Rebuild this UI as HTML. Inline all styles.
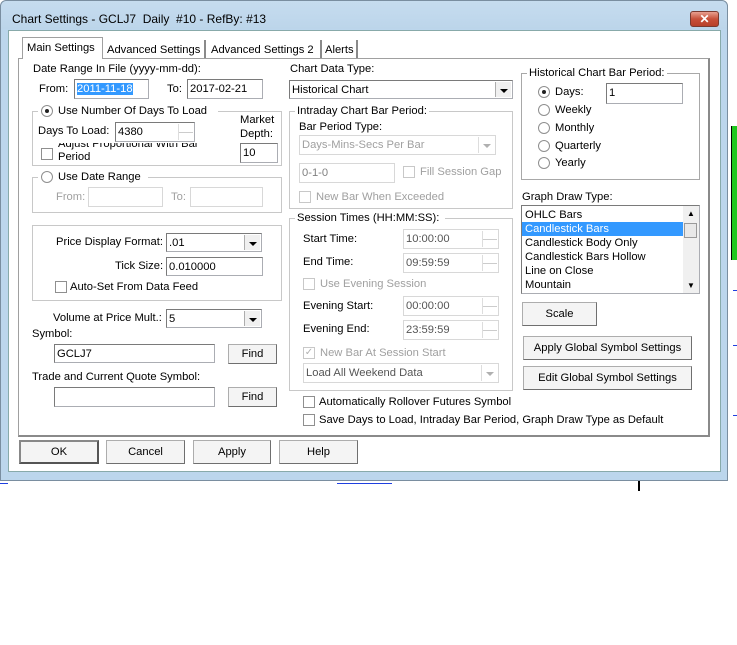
<!DOCTYPE html>
<html><head><style>
*{margin:0;padding:0;box-sizing:border-box}
body{width:737px;height:645px;background:#fff;position:relative;overflow:hidden;font-family:"Liberation Sans",sans-serif;font-size:11.2px;color:#000}
.a{position:absolute}
.t{position:absolute;line-height:14px;white-space:nowrap}
.d{color:#a0a0a0}
.in{position:absolute;background:#fff;border:1px solid #abadb3;border-top-color:#7a7a7a;border-left-color:#7a7a7a;line-height:18px;padding-left:2px;white-space:nowrap;overflow:hidden}
.in.dis{background:#fff;border-color:#d8d8d8;color:#a0a0a0}
.btn{position:absolute;background:#f4f4f4;border:1px solid #adadad;border-right-color:#6f6f6f;border-bottom-color:#6f6f6f;text-align:center;line-height:22px}
.grp{position:absolute;border:1px solid #c8c8c8;box-shadow:inset 1px 1px 0 #fff}
.cb{position:absolute;width:12px;height:12px;border:1px solid #8f8f8f;background:#fff}
.cb.dis{border-color:#c8c8c8}
.rb{position:absolute;width:12px;height:12px;border:1px solid #8f8f8f;border-radius:50%;background:#fff}
.rb.on::after{content:"";position:absolute;left:3px;top:3px;width:4px;height:4px;border-radius:50%;background:#222}
.dd{position:absolute;right:1px;top:1px;bottom:1px;width:16px;background:#f0f0f0;border-left:1px solid #adadad}
.dd::after{content:"";position:absolute;left:4px;top:7px;border:4px solid transparent;border-top:4px solid #000;border-bottom:0}
.dd.dis::after{border-top-color:#b0b0b0}
.sp{position:absolute;right:1px;top:1px;bottom:1px;width:15px;border-left:1px solid #ddd}
.sp::before{content:"";position:absolute;left:0;right:0;top:50%;border-top:1px solid #ccc}
</style></head><body>
<div class="a" style="left:731px;top:126px;width:6px;height:134px;background:#1ec81e;border-left:1px solid #000"></div>
<div class="a" style="left:733px;top:290px;width:4px;height:1px;background:#2040e0"></div>
<div class="a" style="left:733px;top:345px;width:4px;height:1px;background:#2040e0"></div>
<div class="a" style="left:733px;top:415px;width:4px;height:1px;background:#2040e0"></div>
<div class="a" style="left:638px;top:480px;width:2px;height:11px;background:#000"></div>
<div class="a" style="left:0;top:483px;width:8px;height:1px;background:#2040e0"></div>
<div class="a" style="left:337px;top:483px;width:55px;height:1px;background:#2040e0"></div>
<div class="a" style="left:0;top:0;width:728px;height:481px;background:#bcd6ec;border:1px solid #7a8ea0;border-radius:6px 6px 0 0"></div>
<div class="a" style="left:1px;top:1px;width:726px;height:28px;background:linear-gradient(#c6dcef,#bcd5ea);border-radius:6px 6px 0 0"></div>
<div class="t" style="left:12px;top:12px;font-size:12px">Chart Settings - GCLJ7&nbsp; Daily&nbsp; #10 - RefBy: #13</div>
<div class="a" style="left:690px;top:11px;width:29px;height:16px;background:linear-gradient(#e8a090,#c7503a 50%,#b8402a);border:1px solid #7a3a30;border-radius:3px;color:#fff;font-weight:bold;text-align:center;line-height:14px;font-size:12px">✕</div>
<div class="a" style="left:8px;top:30px;width:713px;height:442px;background:#fff;border:1px solid #8aa"></div>
<div class="a" style="left:18px;top:58px;width:692px;height:379px;border:1px solid #a0a0a0;border-right:2px solid #8a8a8a;border-bottom:2px solid #8a8a8a"></div>
<div class="a" style="left:22px;top:37px;width:81px;height:22px;border:1px solid #a0a0a0;border-bottom:none;background:#fff"></div>
<div class="t" style="left:27px;top:41px">Main Settings</div>
<div class="a" style="left:103px;top:40px;width:103px;height:18px;border-right:2px solid #8a8a8a"></div>
<div class="t" style="left:107px;top:43px">Advanced Settings</div>
<div class="a" style="left:206px;top:40px;width:116px;height:18px;border-right:2px solid #8a8a8a"></div>
<div class="t" style="left:211px;top:43px">Advanced Settings 2</div>
<div class="a" style="left:322px;top:40px;width:36px;height:18px;border-right:2px solid #8a8a8a"></div>
<div class="t" style="left:325px;top:43px">Alerts</div>
<div class="t" style="left:33px;top:62px">Date Range In File (yyyy-mm-dd):</div>
<div class="t" style="left:39px;top:82px">From:</div>
<div class="in" style="left:74px;top:79px;width:75px;height:20px"><span style="background:#3399ff;color:#fff">2011-11-18</span></div>
<div class="t" style="left:167px;top:82px">To:</div>
<div class="in" style="left:187px;top:79px;width:76px;height:20px">2017-02-21</div>
<div class="grp" style="left:32px;top:111px;width:250px;height:55px"></div>
<div class="a" style="left:38px;top:104px;width:180px;height:14px;background:#fff"></div>
<div class="rb on" style="left:41px;top:105px"></div>
<div class="t" style="left:58px;top:104px">Use Number Of Days To Load</div>
<div class="t" style="left:38px;top:124px">Days To Load:</div>
<div class="in" style="left:115px;top:122px;width:80px;height:20px">4380<div class="sp"></div></div>
<div class="t" style="left:240px;top:113px;line-height:14px">Market<br>Depth:</div>
<div class="in" style="left:240px;top:143px;width:38px;height:20px">10</div>
<div class="cb" style="left:41px;top:148px"></div>
<div class="a" style="left:58px;top:143px;width:170px;height:17px;overflow:hidden"><div class="t" style="left:0;top:-5px;line-height:13px">Adjust Proportional With Bar<br>Period</div></div>
<div class="grp" style="left:32px;top:177px;width:250px;height:36px"></div>
<div class="a" style="left:38px;top:170px;width:110px;height:14px;background:#fff"></div>
<div class="rb" style="left:41px;top:171px"></div>
<div class="t" style="left:58px;top:170px">Use Date Range</div>
<div class="t d" style="left:56px;top:190px">From:</div>
<div class="in dis" style="left:88px;top:187px;width:75px;height:20px"></div>
<div class="t d" style="left:171px;top:190px">To:</div>
<div class="in dis" style="left:190px;top:187px;width:73px;height:20px"></div>
<div class="grp" style="left:32px;top:225px;width:250px;height:76px"></div>
<div class="t" style="left:56px;top:235px">Price Display Format:</div>
<div class="in" style="left:166px;top:233px;width:96px;height:19px">.01<div class="dd"></div></div>
<div class="t" style="left:115px;top:259px">Tick Size:</div>
<div class="in" style="left:166px;top:257px;width:97px;height:19px">0.010000</div>
<div class="cb" style="left:55px;top:281px"></div>
<div class="t" style="left:70px;top:280px">Auto-Set From Data Feed</div>
<div class="t" style="left:53px;top:311px">Volume at Price Mult.:</div>
<div class="in" style="left:166px;top:309px;width:96px;height:19px">5<div class="dd"></div></div>
<div class="t" style="left:32px;top:327px">Symbol:</div>
<div class="in" style="left:54px;top:344px;width:161px;height:19px">GCLJ7</div>
<div class="btn" style="left:228px;top:344px;width:49px;height:20px;line-height:18px">Find</div>
<div class="t" style="left:32px;top:370px">Trade and Current Quote Symbol:</div>
<div class="in" style="left:54px;top:387px;width:161px;height:20px"></div>
<div class="btn" style="left:228px;top:387px;width:49px;height:20px;line-height:18px">Find</div>
<div class="t" style="left:290px;top:62px">Chart Data Type:</div>
<div class="in" style="left:289px;top:80px;width:224px;height:19px">Historical Chart<div class="dd"></div></div>
<div class="grp" style="left:289px;top:111px;width:224px;height:98px"></div>
<div class="a" style="left:295px;top:104px;width:134px;height:14px;background:#fff"></div>
<div class="t" style="left:297px;top:104px">Intraday Chart Bar Period:</div>
<div class="t" style="left:299px;top:120px">Bar Period Type:</div>
<div class="in dis" style="left:299px;top:135px;width:197px;height:20px">Days-Mins-Secs Per Bar<div class="dd dis" style="background:#fff;border-left-color:#ddd"></div></div>
<div class="in dis" style="left:299px;top:163px;width:96px;height:20px;color:#808080">0-1-0</div>
<div class="cb dis" style="left:403px;top:166px"></div>
<div class="t d" style="left:420px;top:165px">Fill Session Gap</div>
<div class="cb dis" style="left:299px;top:191px"></div>
<div class="t d" style="left:316px;top:190px">New Bar When Exceeded</div>
<div class="grp" style="left:289px;top:218px;width:224px;height:173px"></div>
<div class="a" style="left:295px;top:211px;width:150px;height:14px;background:#fff"></div>
<div class="t" style="left:297px;top:211px">Session Times (HH:MM:SS):</div>
<div class="t" style="left:303px;top:232px">Start Time:</div>
<div class="in dis" style="left:403px;top:229px;width:96px;height:20px;color:#555">10:00:00<div class="sp"></div></div>
<div class="t" style="left:303px;top:255px">End Time:</div>
<div class="in dis" style="left:403px;top:253px;width:96px;height:20px;color:#555">09:59:59<div class="sp"></div></div>
<div class="cb dis" style="left:303px;top:278px"></div>
<div class="t d" style="left:320px;top:277px">Use Evening Session</div>
<div class="t" style="left:303px;top:299px">Evening Start:</div>
<div class="in dis" style="left:403px;top:296px;width:96px;height:20px;color:#555">00:00:00<div class="sp"></div></div>
<div class="t" style="left:303px;top:322px">Evening End:</div>
<div class="in dis" style="left:403px;top:320px;width:96px;height:20px;color:#555">23:59:59<div class="sp"></div></div>
<div class="cb dis" style="left:303px;top:347px;color:#b0b0b0;font-size:10px;line-height:10px;text-align:center">✓</div>
<div class="t d" style="left:320px;top:346px">New Bar At Session Start</div>
<div class="in dis" style="left:303px;top:363px;width:196px;height:20px;color:#555">Load All Weekend Data<div class="dd dis" style="background:#fff;border-left-color:#ddd"></div></div>
<div class="cb" style="left:303px;top:396px"></div>
<div class="t" style="left:319px;top:395px">Automatically Rollover Futures Symbol</div>
<div class="cb" style="left:303px;top:414px"></div>
<div class="t" style="left:319px;top:413px">Save Days to Load, Intraday Bar Period, Graph Draw Type as Default</div>
<div class="grp" style="left:521px;top:73px;width:179px;height:107px;border-color:#a8a8a8"></div>
<div class="a" style="left:527px;top:66px;width:140px;height:14px;background:#fff"></div>
<div class="t" style="left:529px;top:66px">Historical Chart Bar Period:</div>
<div class="rb on" style="left:538px;top:86px"></div>
<div class="t" style="left:555px;top:85px">Days:</div>
<div class="in" style="left:606px;top:83px;width:77px;height:21px">1</div>
<div class="rb" style="left:538px;top:104px"></div><div class="t" style="left:555px;top:103px">Weekly</div>
<div class="rb" style="left:538px;top:122px"></div><div class="t" style="left:555px;top:121px">Monthly</div>
<div class="rb" style="left:538px;top:140px"></div><div class="t" style="left:555px;top:139px">Quarterly</div>
<div class="rb" style="left:538px;top:157px"></div><div class="t" style="left:555px;top:156px">Yearly</div>
<div class="t" style="left:522px;top:190px">Graph Draw Type:</div>
<div class="a" style="left:521px;top:205px;width:179px;height:89px;border:1px solid #abadb3;border-top-color:#7a7a7a;border-left-color:#7a7a7a;background:#fff"></div>
<div class="a" style="left:522px;top:222px;width:161px;height:14px;background:#3399ff"></div>
<div class="t" style="left:525px;top:208px">OHLC Bars</div>
<div class="t" style="left:525px;top:222px;color:#fff">Candlestick Bars</div>
<div class="t" style="left:525px;top:236px">Candlestick Body Only</div>
<div class="t" style="left:525px;top:250px">Candlestick Bars Hollow</div>
<div class="t" style="left:525px;top:264px">Line on Close</div>
<div class="t" style="left:525px;top:278px">Mountain</div>
<div class="a" style="left:683px;top:206px;width:16px;height:87px;background:#f0f0f0"></div>
<div class="a" style="left:684px;top:223px;width:13px;height:15px;background:#e8e8e8;border:1px solid #999"></div>
<div class="t" style="left:687px;top:207px;font-size:8px">▲</div>
<div class="t" style="left:687px;top:279px;font-size:8px">▼</div>
<div class="btn" style="left:522px;top:302px;width:75px;height:24px">Scale</div>
<div class="btn" style="left:523px;top:336px;width:169px;height:24px">Apply Global Symbol Settings</div>
<div class="btn" style="left:523px;top:366px;width:169px;height:24px">Edit Global Symbol Settings</div>
<div class="btn" style="left:19px;top:440px;width:80px;height:24px;border:2px solid #555;border-top-color:#888;border-left-color:#888;line-height:20px">OK</div>
<div class="btn" style="left:106px;top:440px;width:79px;height:24px">Cancel</div>
<div class="btn" style="left:193px;top:440px;width:78px;height:24px">Apply</div>
<div class="btn" style="left:279px;top:440px;width:79px;height:24px">Help</div>
</body></html>
